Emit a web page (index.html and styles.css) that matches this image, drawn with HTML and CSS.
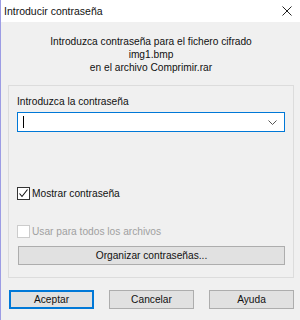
FILE: index.html
```html
<!DOCTYPE html>
<html lang="es">
<head>
  <meta charset="UTF-8" />
  <title>Introducir contraseña</title>
  <link rel="stylesheet" href="styles.css">
</head>
<body>
<div class="dialog">
  <div class="titlebar">
    <span class="title">Introducir contraseña</span>
    <svg class="close" width="10" height="10" viewBox="0 0 10 10"><path d="M0.5 0.5 L9.5 9.5 M9.5 0.5 L0.5 9.5" stroke="#222" stroke-width="1"/></svg>
  </div>

  <div class="content">
    <p class="info">Introduzca contraseña para el fichero cifrado<br>img1.bmp<br>en el archivo Comprimir.rar</p>

    <div class="group">
      <div class="label">Introduzca la contraseña</div>
      <div class="combo">
        <span class="caret"></span>
        <svg class="chev" width="9" height="5" viewBox="0 0 9 5"><path d="M0.5 0.5 L4.5 4.5 L8.5 0.5" fill="none" stroke="#555" stroke-width="1"/></svg>
      </div>

      <label class="check first">
        <span class="box on"><svg width="11" height="11" viewBox="0 0 11 11"><path d="M1.5 5.5 L4 8.5 L9.5 1.5" fill="none" stroke="#111" stroke-width="1.1"/></svg></span>
        Mostrar contraseña
      </label>

      <label class="check disabled">
        <span class="box"></span>
        Usar para todos los archivos
      </label>

      <div class="btn wide">Organizar contraseñas...</div>
    </div>

    <div class="buttons">
      <div class="btn default">Aceptar</div>
      <div class="btn">Cancelar</div>
      <div class="btn">Ayuda</div>
    </div>
  </div>
</div>
</body>
</html>
```

FILE: styles.css
```css
body { margin: 0; font-family: "Liberation Sans", Arial, sans-serif; font-size: 10.2px; color: #111; background: #f0f0f0; }
.dialog { width: 300px; height: 320px; background: #f0f0f0; border-left: 1px solid #9c9ce4; box-sizing: border-box; }
.titlebar { height: 22px; background: #fff; display: flex; align-items: center; justify-content: space-between; padding: 0 8px 0 3px; }
.title { font-size: 10.5px; }
.close { margin-top: -1px; }
.content { padding: 13px 6px 0 7px; }
.info { margin: 0; text-align: center; line-height: 13px; }
.group { margin-top: 11px; border: 1px solid #dcdcdc; padding: 9px 8px 12px 8px; }
.label { line-height: 13px; }
.combo { margin-top: 4px; height: 20px; box-sizing: border-box; border: 1px solid #0078d7; background: #fff; display: flex; align-items: center; justify-content: space-between; padding: 0 7px 0 5px; }
.caret { width: 1px; height: 12px; background: #000; }
.check { display: flex; align-items: center; gap: 2px; line-height: 13px; }
.check.first { margin-top: 55px; }
.check.disabled { margin-top: 25px; color: #a0a0a0; }
.box { width: 13px; height: 13px; box-sizing: border-box; border: 1px solid #333; background: #fff; display: flex; align-items: center; justify-content: center; }
.check.disabled .box { border-color: #cccccc; }
.btn { height: 19px; box-sizing: border-box; border: 1px solid #adadad; background: #e1e1e1; text-align: center; line-height: 17px; }
.btn.wide { margin-top: 8px; margin-left: 1px; }
.buttons { margin-top: 12px; display: flex; gap: 15px; padding-left: 1px; }
.buttons .btn { width: 85px; }
.btn.default { border: 2px solid #0078d7; line-height: 15px; }
```
